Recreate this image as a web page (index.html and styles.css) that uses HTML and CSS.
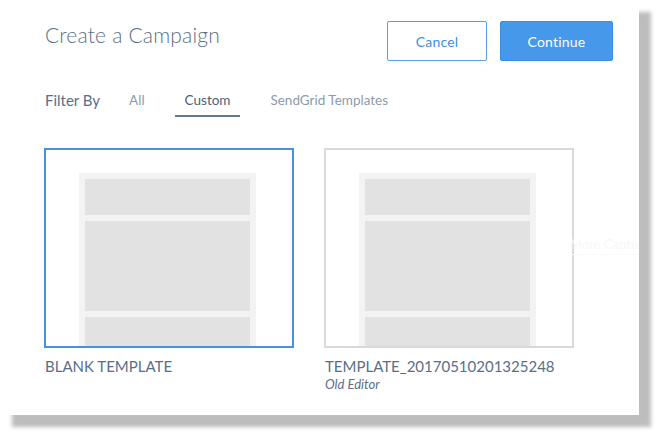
FILE: index.html
```html
<!DOCTYPE html>
<html>
<head>
<meta charset="utf-8">
<link rel="stylesheet" href="styles.css">
</head>
<body>
<div class="frame">
<div class="panel">
  <div class="header">
    <h1 class="title">Create a Campaign</h1>
    <div class="actions">
      <button class="btn btn-outline">Cancel</button>
      <button class="btn btn-primary">Continue</button>
    </div>
  </div>
  <div class="filters">
    <span class="filter-label">Filter By</span>
    <span class="tab">All</span>
    <span class="tab active">Custom</span>
    <span class="tab">SendGrid Templates</span>
  </div>
  <div class="cards">
    <div class="card">
      <div class="thumb selected">
        <div class="preview">
          <div class="block b1"></div>
          <div class="block b2"></div>
          <div class="block b3"></div>
        </div>
      </div>
      <div class="card-name">BLANK TEMPLATE</div>
    </div>
    <div class="card">
      <div class="thumb">
        <div class="preview">
          <div class="block b1"></div>
          <div class="block b2"></div>
          <div class="block b3"></div>
        </div>
      </div>
      <div class="card-name">TEMPLATE_20170510201325248</div>
      <div class="card-sub">Old Editor</div>
    </div>
  </div>
  <div class="ghost">More Capture</div>
</div>
</div>
</body>
</html>
```
FILE: styles.css
```css
* { box-sizing: border-box; }
html, body { margin: 0; padding: 0; background: #ffffff; }
body {
  font-family: Lato, "Open Sans", "Liberation Sans", sans-serif;
  color: #5a6e87;
}
.frame {
  width: 659px;
  height: 436px;
  padding: 0 20px 21px 0;
  overflow: visible;
}
.panel {
  position: relative;
  width: 639px;
  height: 415px;
  background: #ffffff;
  box-shadow: 12px 12px 4px #bdbdbd;
  padding: 21px 26px 0 44px;
}
.header {
  display: flex;
  justify-content: space-between;
  align-items: flex-start;
}
.title {
  margin: 1px 0 0 1px;
  font-size: 21px;
  font-weight: 300;
  line-height: 26px;
  letter-spacing: 0.2px;
  color: #5a6e87;
}
.actions { display: flex; gap: 13px; }
.btn {
  height: 40px;
  border-radius: 2px;
  font-family: Lato, "Open Sans", "Liberation Sans", sans-serif;
  font-size: 14px;
  letter-spacing: 0.2px;
  cursor: pointer;
  padding: 0;
}
.btn-outline {
  width: 100px;
  background: #ffffff;
  border: 1px solid #56a0ea;
  color: #3f8fdf;
}
.btn-primary {
  width: 113px;
  background: #4598ea;
  border: 1px solid #3a8fe3;
  color: #ffffff;
}
.filters {
  display: flex;
  align-items: flex-end;
  margin-top: 27px;
  margin-left: 1px;
}
.filter-label {
  font-size: 15px;
  line-height: 24px;
  color: #5a6e87;
  margin-right: 19px;
  padding-bottom: 5px;
}
.tab {
  font-size: 13.5px;
  line-height: 24px;
  color: #8d9aab;
  padding: 0 10px 3px;
  border-bottom: 2px solid transparent;
  margin-right: 20px;
}
.tab.active {
  color: #4d5f76;
  border-bottom-color: #62778f;
}
.cards {
  display: flex;
  gap: 30px;
  margin-top: 31px;
}
.card { width: 250px; }
.thumb {
  width: 250px;
  height: 200px;
  border: 2px solid #d9d9d9;
  overflow: hidden;
  padding: 23px 0 0 33px;
}
.thumb.selected { border-color: #4a8fe6; }
.preview {
  width: 177px;
  height: 200px;
  background: #f3f3f3;
  padding: 6px;
  display: flex;
  flex-direction: column;
  gap: 6px;
}
.block { background: #e2e2e2; flex: none; }
.b1 { height: 36px; }
.b2 { height: 90px; }
.b3 { height: 60px; }
.card-name {
  margin-top: 9px;
  margin-left: 1px;
  font-size: 15px;
  line-height: 18px;
  color: #5a6e87;
}
.card-sub {
  margin-top: 1px;
  margin-left: 1px;
  font-size: 13px;
  font-style: italic;
  font-weight: 400;
  line-height: 16px;
  color: #5a6e87;
}
.ghost {
  position: absolute;
  left: 570px;
  top: 236px;
  width: 69px;
  overflow: hidden;
  white-space: nowrap;
  font-size: 13px;
  color: #f8f8f8;
  border-bottom: 1px solid #fafafa;
  padding-bottom: 2px;
}
```
